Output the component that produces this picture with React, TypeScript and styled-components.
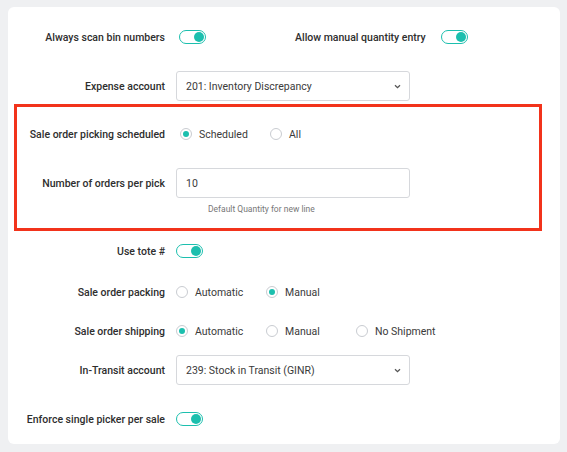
import React from "react";
import styled, { createGlobalStyle } from "styled-components";

const teal = "#1cbfae";

const GlobalStyle = createGlobalStyle`
  html, body {
    margin: 0;
    padding: 0;
    background: #eff0f2;
  }
  body {
    font-family: Roboto, "Liberation Sans", sans-serif;
    color: #2e2e2e;
  }
`;

const Page = styled.div`
  padding: 7px 7px 7px 8px;
`;

const Card = styled.div`
  width: 552px;
  box-sizing: border-box;
  background: #ffffff;
  border-radius: 6px;
  padding: 20px 0 15px 0;
  display: flex;
  flex-direction: column;
`;

const Row = styled.div<{ $label?: number; $h?: number; $mt?: number }>`
  display: grid;
  grid-template-columns: ${(p) => p.$label ?? 157}px 1fr;
  column-gap: 11px;
  align-items: center;
  height: ${(p) => p.$h ?? 20}px;
  margin-top: ${(p) => p.$mt ?? 0}px;
`;

const Label = styled.div`
  text-align: right;
  font-size: 10.5px;
  font-weight: 500;
  color: #2e2e2e;
  white-space: nowrap;
`;

const Controls = styled.div<{ $indent?: number }>`
  display: flex;
  align-items: center;
  padding-left: ${(p) => p.$indent ?? 0}px;
`;

const PairRow = styled.div`
  display: grid;
  grid-template-columns: 157px 1fr;
  column-gap: 11px;
  align-items: center;
  height: 20px;
`;

const PairControls = styled.div`
  display: flex;
  align-items: center;
  padding-left: 3px;
`;

const SecondLabel = styled(Label)`
  margin-left: 89px;
  margin-right: 15px;
`;

const Track = styled.span`
  position: relative;
  display: inline-block;
  flex: none;
  width: 27px;
  height: 14px;
  box-sizing: border-box;
  border: 1.5px solid ${teal};
  border-radius: 8px;
  background: #fff;
`;

const Knob = styled.span`
  position: absolute;
  right: 1px;
  top: 50%;
  width: 10px;
  height: 10px;
  margin-top: -5px;
  border-radius: 50%;
  background: ${teal};
`;

const Toggle = () => (
  <Track>
    <Knob />
  </Track>
);

const SelectBox = styled.div`
  width: 234px;
  height: 30px;
  box-sizing: border-box;
  border: 1px solid #d6d8dc;
  border-radius: 3px;
  display: flex;
  align-items: center;
  justify-content: space-between;
  padding: 0 8px 0 9px;
  font-size: 10.5px;
  color: #3a3a3a;
`;

const Chevron = () => (
  <svg width="7" height="5" viewBox="0 0 7 5">
    <path d="M1 1.2 L3.5 3.6 L6 1.2" fill="none" stroke="#555" strokeWidth="1.3" />
  </svg>
);

const TextInput = styled.div`
  width: 234px;
  height: 30px;
  box-sizing: border-box;
  border: 1px solid #d6d8dc;
  border-radius: 3px;
  display: flex;
  align-items: center;
  padding: 0 9px;
  font-size: 10.5px;
  color: #3a3a3a;
`;

const RadioOption = styled.label<{ $w?: number }>`
  display: inline-flex;
  align-items: center;
  width: ${(p) => p.$w ?? 90}px;
  font-size: 10.5px;
  color: #3a3a3a;
`;

const RadioDot = styled.span<{ $on?: boolean }>`
  position: relative;
  display: inline-block;
  width: 12px;
  height: 12px;
  box-sizing: border-box;
  border-radius: 50%;
  border: 1px solid #c9ccd1;
  background: #fff;
  margin-right: 7px;
  &::after {
    content: "";
    display: ${(p) => (p.$on ? "block" : "none")};
    position: absolute;
    left: 2px;
    top: 2px;
    width: 6px;
    height: 6px;
    border-radius: 50%;
    background: ${teal};
  }
`;

const Radio = ({ on, text, w }: { on?: boolean; text: string; w?: number }) => (
  <RadioOption $w={w}>
    <RadioDot $on={on} />
    {text}
  </RadioOption>
);

const Highlight = styled.section`
  margin: 3px 18px 0 6px;
  border: 3px solid #f2331b;
  padding: 17px 0 12px 0;
  display: flex;
  flex-direction: column;
`;

const Hint = styled.div`
  margin-top: 5px;
  padding-left: 191px;
  font-size: 8.5px;
  line-height: 13px;
  color: #777;
`;

export default function App() {
  return (
    <>
      <GlobalStyle />
      <Page>
        <Card>
          <PairRow>
            <Label>Always scan bin numbers</Label>
            <PairControls>
              <Toggle />
              <SecondLabel>Allow manual quantity entry</SecondLabel>
              <Toggle />
            </PairControls>
          </PairRow>

          <Row $h={30} $mt={24}>
            <Label>Expense account</Label>
            <Controls>
              <SelectBox>
                201: Inventory Discrepancy
                <Chevron />
              </SelectBox>
            </Controls>
          </Row>

          <Highlight>
            <Row $label={148}>
              <Label>Sale order picking scheduled</Label>
              <Controls $indent={4}>
                <Radio on text="Scheduled" />
                <Radio text="All" />
              </Controls>
            </Row>
            <Row $label={148} $h={30} $mt={24}>
              <Label>Number of orders per pick</Label>
              <Controls>
                <TextInput>10</TextInput>
              </Controls>
            </Row>
            <Hint>Default Quantity for new line</Hint>
          </Highlight>

          <Row $mt={10}>
            <Label>Use tote #</Label>
            <Controls>
              <Toggle />
            </Controls>
          </Row>

          <Row $mt={21}>
            <Label>Sale order packing</Label>
            <Controls>
              <Radio text="Automatic" />
              <Radio on text="Manual" />
            </Controls>
          </Row>

          <Row $mt={19}>
            <Label>Sale order shipping</Label>
            <Controls>
              <Radio on text="Automatic" />
              <Radio text="Manual" />
              <Radio text="No Shipment" />
            </Controls>
          </Row>

          <Row $h={30} $mt={14}>
            <Label>In-Transit account</Label>
            <Controls>
              <SelectBox>
                239: Stock in Transit (GINR)
                <Chevron />
              </SelectBox>
            </Controls>
          </Row>

          <Row $mt={24}>
            <Label>Enforce single picker per sale</Label>
            <Controls>
              <Toggle />
            </Controls>
          </Row>
        </Card>
      </Page>
    </>
  );
}
